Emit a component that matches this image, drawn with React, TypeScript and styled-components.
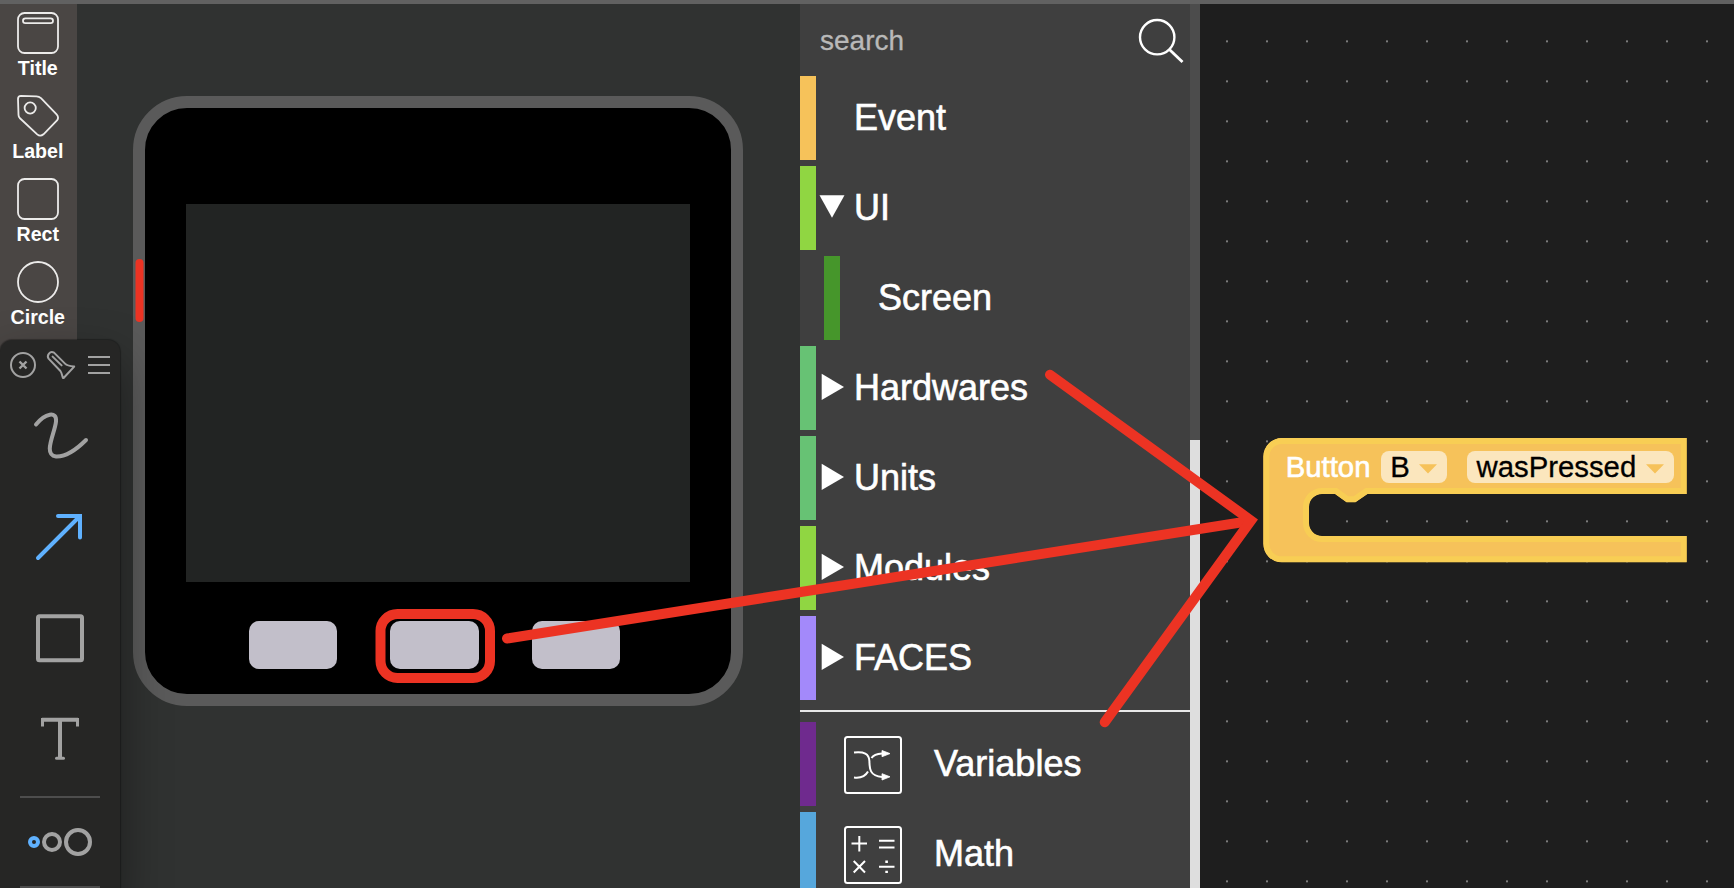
import React from "react";
import styled, { createGlobalStyle } from "styled-components";

const GlobalStyle = createGlobalStyle`
  * { box-sizing: border-box; }
  body {
    margin: 0;
    overflow: hidden;
    background: #303231;
    font-family: "Liberation Sans", Arial, Helvetica, sans-serif;
  }
  svg { display: block; }
`;

const Page = styled.div`
  position: relative;
  width: 1734px;
  height: 888px;
  overflow: hidden;
  display: flex;
  flex-direction: column;
`;

const TopBar = styled.div`
  flex: none;
  height: 4px;
  background: #616161;
`;

const Main = styled.main`
  flex: 1;
  min-height: 0;
  display: flex;
`;

/* ---------- Widget column ---------- */

const WidgetBar = styled.aside`
  width: 77px;
  background: #4a4644;
  display: flex;
  flex-direction: column;
`;

const Widget = styled.div`
  height: 83.1px;
  width: 75.6px;
  padding-top: 7.6px;
  display: flex;
  flex-direction: column;
  align-items: center;
  svg { fill: none; stroke: #ecebea; stroke-width: 1.8; flex: none; }
`;

const WidgetName = styled.span`
  margin-top: 3.4px;
  font-size: 19.6px;
  line-height: 23px;
  font-weight: bold;
  color: #fff;
`;

/* ---------- Device preview ---------- */

const Stage = styled.section`
  width: 723px;
  padding: 91.5px 0 0 56px;
  background: #303231;
`;

const Device = styled.div`
  width: 610px;
  height: 610.5px;
  padding: 96.5px 0 0 41px;
  border: 12px solid #5a5a5a;
  border-radius: 54px;
  background: #000;
`;

const DeviceScreen = styled.div`
  width: 504px;
  height: 378px;
  background: #222423;
`;

const DeviceButtons = styled.div`
  display: flex;
  gap: 53.3px;
  padding: 39px 0 0 62.8px;
`;

const DeviceButton = styled.div`
  width: 88.3px;
  height: 48px;
  border-radius: 10px;
  background: #c2bfca;
`;

/* ---------- Block toolbox ---------- */

const Toolbox = styled.nav`
  width: 390px;
  background: #3f3f3f;
  overflow: hidden;
`;

const SearchRow = styled.div`
  height: 72px;
  padding: 0 6px 0 20px;
  display: flex;
  justify-content: space-between;
  font-size: 28px;
  line-height: 74px;
  color: #b9b9b9;
  -webkit-text-stroke: 0.3px #b9b9b9;
`;

const Category = styled.div<{ $color: string; $nested?: boolean }>`
  height: 84px;
  margin: 0 0 6px ${(p) => (p.$nested ? 24 : 0)}px;
  border-left: 16px solid ${(p) => p.$color};
  display: flex;
  align-items: center;
  font-size: 36px;
  line-height: 42px;
  color: #fff;
  -webkit-text-stroke: 0.6px #fff;
`;

const Caret = styled.span`
  width: 38px;
  height: 30px;
  margin-top: -5px;
  svg { fill: #fff; }
`;

const IconSlot = styled.span`
  width: 90px;
  padding-left: 28px;
  margin: 2px 28px 0 0;
  svg { fill: none; stroke: #fff; stroke-width: 2; }
`;

const Separator = styled.div`
  height: 2px;
  margin: 10px 0;
  background: #e9e9e9;
`;

const ScrollTrack = styled.div`
  width: 10px;
  padding-top: 436px;
  background: #4c4c4c;
`;

const ScrollThumb = styled.div`
  height: 448px;
  background: #dedede;
`;

/* ---------- Workspace ---------- */

const Workspace = styled.section`
  position: relative;
  flex: 1;
  background: #1e1e1e;
`;

const Block = styled.div`
  position: absolute;
  left: 63px;
  top: 434px;
  width: 424px;
  height: 125px;
`;

const BlockShape = styled.svg`
  position: absolute;
  inset: 0;
`;

const BlockFields = styled.div`
  position: relative;
  display: flex;
  align-items: center;
  padding: 13px 0 0 22.7px;
  height: 45px;
  font-size: 29.33px;
  line-height: 32px;
`;

const BlockLabel = styled.span`
  flex: none;
  width: 95px;
  color: #fff;
  -webkit-text-stroke: 0.6px #fff;
`;

const Dropdown = styled.span<{ $width: number }>`
  width: ${(p) => p.$width}px;
  height: 32px;
  margin-right: 20px;
  padding: 0 10px 0 9.5px;
  display: flex;
  flex: none;
  align-items: center;
  justify-content: space-between;
  border-radius: 8px;
  background: #fbe6bd;
  color: #000;
  -webkit-text-stroke: 0.3px #000;
  svg { fill: #f6c25a; margin-top: 3px; }
`;

/* ---------- Floating drawing palette ---------- */

const Palette = styled.aside`
  position: absolute;
  left: 0;
  top: 340px;
  width: 120px;
  height: 560px;
  border-radius: 12px 12px 0 0;
  background: #262625;
  box-shadow: 0 0 1px 1px rgba(0, 0, 0, 0.3), 0 22px 50px rgba(0, 0, 0, 0.42);
  display: flex;
  flex-direction: column;
  align-items: center;
  svg { fill: none; stroke: #a2a2a2; flex: none; }
`;

const PaletteHeader = styled.div`
  width: 100%;
  height: 45px;
`;

const Tools = styled.div`
  height: 411px;
  flex: none;
`;

const Tool = styled.div<{ $active?: boolean }>`
  width: 120px;
  height: 101.5px;
  display: flex;
  align-items: center;
  justify-content: center;
  svg {
    stroke: ${(p) => (p.$active ? "#5fb1ff" : "#a2a2a2")};
    stroke-width: 4;
    stroke-linecap: round;
    stroke-linejoin: round;
  }
`;

const Rule = styled.div`
  width: 80px;
  height: 2px;
  flex: none;
  background: #4d4d4d;
`;

const Sizes = styled.div`
  height: 88px;
  display: flex;
  align-items: center;
  justify-content: center;
`;

const Annotations = styled.svg`
  position: absolute;
  inset: 0;
  fill: none;
  stroke: #ec3323;
  stroke-width: 10;
  stroke-linecap: round;
`;

const widgets = [
  {
    name: "Title",
    icon: (
      <>
        <rect x="1" y="1" width="40" height="40" rx="6.5" />
        <rect x="6" y="6.3" width="30" height="4.8" rx="2.4" />
      </>
    ),
  },
  {
    name: "Label",
    icon: (
      <>
        <path d="M4 .9 L19.5 1.3 Q22 1.4 24 3.2 L39.6 19.4 Q42.3 22.4 40 25.4 L26.5 39.3 Q23.3 42 20.2 39.4 L2.7 23 Q1.6 21.8 1.5 20 L1 4 Q1 .9 4 .9 Z" />
        <circle cx="13.2" cy="13" r="5.6" />
      </>
    ),
  },
  { name: "Rect", icon: <rect x="1" y="1" width="40" height="40" rx="6.5" /> },
  { name: "Circle", icon: <circle cx="21" cy="21" r="20" /> },
];

const categories: { name: string; color: string; nested?: boolean; caret?: "open" | "closed" }[] = [
  { name: "Event", color: "#f6c25a" },
  { name: "UI", color: "#90d642", caret: "open" },
  { name: "Screen", color: "#46962b", nested: true },
  { name: "Hardwares", color: "#67c274", caret: "closed" },
  { name: "Units", color: "#67c274", caret: "closed" },
  { name: "Modules", color: "#90d642", caret: "closed" },
  { name: "FACES", color: "#a389fa", caret: "closed" },
];

const blockPath =
  "M18.8 0 H423.7 V56 H104.5 L92.5 64.3 H83.5 L72 56 H59 A13 13 0 0 0 46 69 V85 A13 13 0 0 0 59 98 H423.7 V124.3 H18.8 A18.5 18.5 0 0 1 .3 105.8 V18.5 A18.5 18.5 0 0 1 18.8 0 Z";

const DropArrow = () => (
  <svg width="18" height="10">
    <path d="M0 .3 H18 L9 9.6 Z" />
  </svg>
);

export default function App() {
  return (
    <Page>
      <GlobalStyle />
      <TopBar />
      <Main>
        <WidgetBar>
          {widgets.map((w) => (
            <Widget key={w.name}>
              <svg width="42" height="42">{w.icon}</svg>
              <WidgetName>{w.name}</WidgetName>
            </Widget>
          ))}
        </WidgetBar>

        <Stage>
          <Device>
            <DeviceScreen />
            <DeviceButtons>
              <DeviceButton />
              <DeviceButton />
              <DeviceButton />
            </DeviceButtons>
          </Device>
        </Stage>

        <Toolbox>
          <SearchRow>
            <span>search</span>
            <svg width="46" height="72" fill="none" stroke="#fff" strokeWidth="2.4">
              <circle cx="19.2" cy="33.2" r="17.2" />
              <path d="M31.4 45.4 L44.5 58" strokeWidth="2.8" />
            </svg>
          </SearchRow>
          {categories.map((c) => (
            <Category key={c.name} $color={c.color} $nested={c.nested}>
              <Caret>
                {c.caret && (
                  <svg width="37" height="30">
                    {c.caret === "open" ? (
                      <path d="M3.5 4.2 H28.5 L16 26.7 Z" />
                    ) : (
                      <path d="M5.7 2.8 V29 L28 16 Z" />
                    )}
                  </svg>
                )}
              </Caret>
              {c.name}
            </Category>
          ))}
          <Separator />
          <Category $color="#6f2a8e">
            <IconSlot>
              <svg width="58" height="58">
                <rect x="1" y="1" width="56" height="56" rx="2.5" />
                <path d="M10 16.5 C20 15.5 25 17.5 25.4 25 C25.5 33 26 40 38 41" />
                <path d="M10 41.5 C18 42.5 21.5 40 24 35.5" />
                <path d="M27.5 22 C30 18 34 17.7 38 17.5" />
                <path d="M38 14.5 L46 17.6 L38 20.7 Z M38 37.7 L46 40.8 L38 44 Z" fill="#fff" strokeWidth=".8" />
              </svg>
            </IconSlot>
            Variables
          </Category>
          <Category $color="#56a7dc">
            <IconSlot>
              <svg width="58" height="58">
                <rect x="1" y="1" width="56" height="56" rx="2.5" />
                <path d="M7.5 17.5 H23 M15.3 10 V25.5 M35 14.8 H50.5 M35 21.5 H50.5 M9.7 35 L21 46.5 M21 35 L9.7 46.5 M35 40.7 H50.5" />
                <path d="M42.6 34.5 V37 M42.6 44.7 V47" strokeWidth="2.6" />
              </svg>
            </IconSlot>
            Math
          </Category>
        </Toolbox>
        <ScrollTrack>
          <ScrollThumb />
        </ScrollTrack>

        <Workspace>
          <svg width="534" height="884">
            <defs>
              <pattern id="dots" width="40" height="40" patternUnits="userSpaceOnUse">
                <rect x="26" y="36" width="2" height="1" fill="#585858" />
                <rect x="26" y="37" width="2" height="1" fill="#7c7c7c" />
                <rect x="26" y="38" width="2" height="1" fill="#3c3c3c" />
              </pattern>
            </defs>
            <rect width="534" height="884" fill="url(#dots)" />
          </svg>
          <Block>
            <BlockShape width="424" height="125">
              <clipPath id="block-clip">
                <path d={blockPath} />
              </clipPath>
              <path d={blockPath} fill="#f6c25a" stroke="#f8ce54" strokeWidth="12" clipPath="url(#block-clip)" />
            </BlockShape>
            <BlockFields>
              <BlockLabel>Button</BlockLabel>
              <Dropdown $width={66.3}>
                B<DropArrow />
              </Dropdown>
              <Dropdown $width={206.7}>
                wasPressed
                <DropArrow />
              </Dropdown>
            </BlockFields>
          </Block>
        </Workspace>
      </Main>

      <Palette>
        <PaletteHeader>
          <svg width="120" height="50" strokeWidth="2">
            <circle cx="23" cy="25" r="12" />
            <path d="M19.5 21.5 L26.5 28.5 M26.5 21.5 L19.5 28.5" strokeWidth="2.4" />
            <path
              d="M48.6 18.6 C46.4 15.6 50 10.2 54 12.6 L65 23.6 C67.5 26 70 26.2 74.2 26.6 L63.6 38 C62.2 38.6 62.4 33.5 60.4 31 Z M52.6 16.6 L61.6 25.4"
              strokeLinejoin="round"
              strokeLinecap="round"
            />
            <path d="M88 17 H110 M88 25 H110 M88 33 H110" />
          </svg>
        </PaletteHeader>
        <Tools>
          <Tool>
            <svg width="60" height="60">
              <path d="M6 18.5 C15 7.5 27 4.5 26 15.5 C25 27 12.5 49 26 50.5 C37 51 48 42 56 34" />
            </svg>
          </Tool>
          <Tool $active>
            <svg width="60" height="60">
              <path d="M8 51 L49.5 9.5 M28 9 H50 V30.5" style={{ strokeLinejoin: "miter" }} />
            </svg>
          </Tool>
          <Tool>
            <svg width="60" height="60">
              <rect x="8" y="7.25" width="44" height="44" rx="1.5" />
            </svg>
          </Tool>
          <Tool>
            <svg width="60" height="60">
              <path d="M12.5 16.5 V9.5 H47.5 V16.5" style={{ strokeWidth: 3, strokeLinecap: "butt", strokeLinejoin: "miter" }} />
              <path d="M12 9.8 H48 M30 9.8 V49" style={{ strokeLinecap: "butt" }} />
              <path d="M26.5 48.3 H33.5" style={{ strokeWidth: 3 }} />
            </svg>
          </Tool>
        </Tools>
        <Rule />
        <Sizes>
          <svg width="66" height="30" strokeWidth="4">
            <circle cx="7" cy="15" r="4" style={{ stroke: "#5fb1ff" }} />
            <circle cx="25" cy="15" r="8" />
            <circle cx="51" cy="15" r="12" />
          </svg>
        </Sizes>
        <Rule />
      </Palette>

      <Annotations width="1734" height="888">
        <path d="M139.5 263 V318" strokeWidth="8" style={{ strokeWidth: 8 }} />
        <rect x="380.5" y="614" width="109.5" height="64" rx="17" />
        <path d="M507 638.5 L1250 521" />
        <path d="M1050 374.7 L1251 520.5 L1104.7 722.3" strokeLinejoin="miter" />
      </Annotations>
    </Page>
  );
}
